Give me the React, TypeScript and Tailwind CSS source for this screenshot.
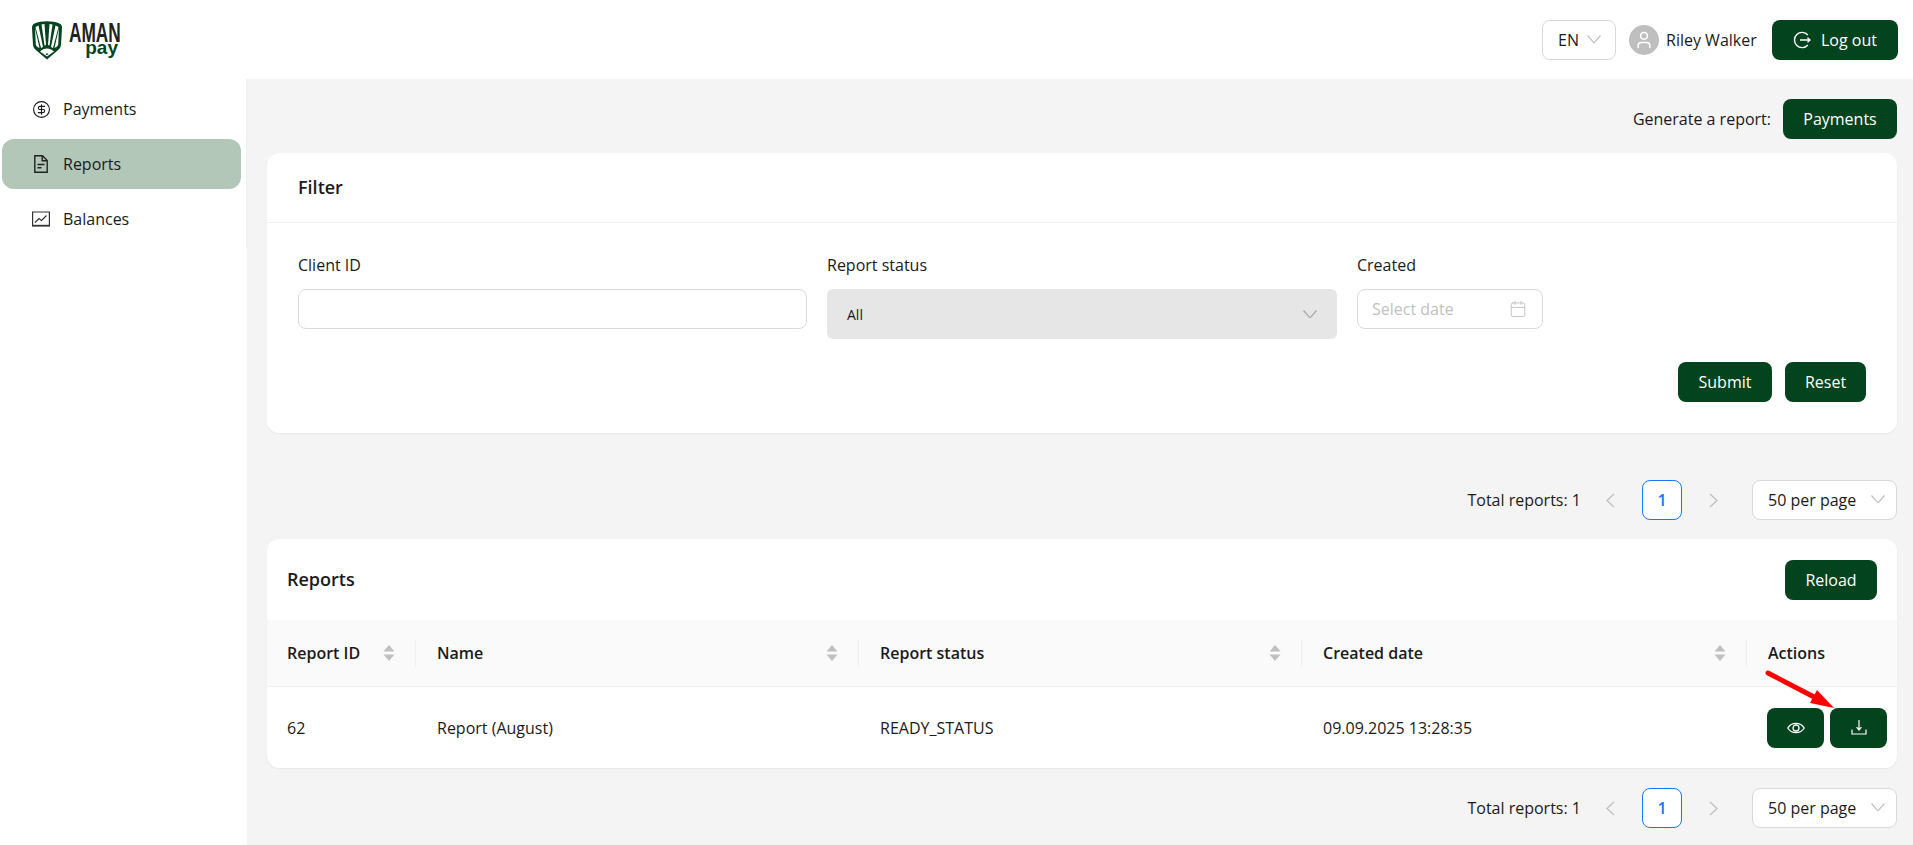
import { CircleDollarSign, Calendar, User } from 'lucide-react';

const Btn = ({ className = '', children }: { className?: string; children: React.ReactNode }) => (
  <button className={`flex h-10 items-center justify-center rounded-lg bg-[#03431d] text-white ${className}`}>{children}</button>
);

const Sorter = () => (
  <svg width="12" height="20" viewBox="0 0 12 20" className="shrink-0 fill-[#bfbfbf]">
    <path d="M6 2 L11.5 8.5 H0.5 Z" />
    <path d="M6 18 L11.5 11.5 H0.5 Z" />
  </svg>
);

const Down = ({ className = 'text-[#bfbfbf]', w = 14 }: { className?: string; w?: number }) => (
  <svg width={w} height={w * 0.6} viewBox="0 0 14 8.4" fill="none" stroke="currentColor" strokeWidth="1.2" className={`shrink-0 ${className}`}>
    <path d="M0.5 0.5 L7 7.8 L13.5 0.5" />
  </svg>
);

const Side = ({ right = false, className = '' }: { right?: boolean; className?: string }) => (
  <svg width="9" height="15" viewBox="0 0 9 15" fill="none" stroke="#bfbfbf" strokeWidth="1.3" className={`shrink-0 ${className}`}>
    <path d={right ? 'M1 1 L8 7.5 L1 14' : 'M8 1 L1 7.5 L8 14'} />
  </svg>
);

const Logo = () => (
  <div className="flex items-start gap-[7px]">
    <svg width="30" height="40" viewBox="0 0 30 40">
      <path d="M2.5 3.5 C9 0.5 21 0.5 27.5 3.5 C29.5 4.5 30 6 30 8 L29 25 C28.5 28 27 29.5 25 31 L15 39.5 L5 31 C3 29.5 1.5 28 1 25 L0 8 C0 6 0.5 4.5 2.5 3.5 Z" fill="#03431d" />
      <g fill="#fff">
        <path d="M3.5 7 L6.5 5.5 L11 27 L9 28 Z" />
        <path d="M9.5 4.5 L12.5 4 L14 25 L12.5 25.5 Z" />
        <path d="M17.5 4 L20.5 4.5 L17.5 25.5 L16 25 Z" />
        <path d="M23.5 5.5 L26.5 7 L21 28 L19 27 Z" />
        <path d="M3 8 L7.5 28 L5.5 27 C4.5 26 4 25.5 3.8 24.5 Z" />
        <path d="M27 8 L22.5 28 L24.5 27 C25.5 26 26 25.5 26.2 24.5 Z" />
        <path d="M8 31.5 C12 27.5 18 27.5 22 31.5 L15 36.5 Z" />
      </g>
      <path d="M13.5 34 C14.5 33.4 15.5 33.4 16.5 34 L15 35.2 Z" fill="#03431d" />
    </svg>
    <div className="relative h-[40px] w-[49px] font-['Liberation_Sans',sans-serif] font-bold">
      <span className="absolute left-0 top-[4px] origin-left scale-x-[0.64] whitespace-nowrap text-[27px] leading-[18px] text-[#222]">AMAN</span>
      <span className="absolute right-0 top-[22px] text-[19px] leading-[12px] text-[#03431d]">pay</span>
    </div>
  </div>
);

const LogoutIcon = () => (
  <svg width="18" height="18" viewBox="0 0 18 18" fill="none" stroke="currentColor" strokeWidth="1.4">
    <path d="M14.8 4 A7.6 7.6 0 1 0 14.8 14" />
    <path d="M7 9 H17 M14.5 6.8 L17 9 L14.5 11.2" />
  </svg>
);

const ReportIcon = () => (
  <svg width="14" height="18" viewBox="0 0 14 18" fill="none" stroke="#222" strokeWidth="1.4" className="ml-[2px] mr-[2px]">
    <path d="M0.8 0.8 H8.5 L13.2 5.5 V17.2 H0.8 Z" />
    <path d="M8.2 1 V5.8 H13" />
    <path d="M3.5 9.5 H10.5 M3.5 12.8 H7.5" />
  </svg>
);

const BalanceIcon = () => (
  <svg width="18" height="16" viewBox="0 0 18 16" fill="none" stroke="#333" strokeWidth="1.2">
    <path d="M0.6 1 H17.4 V14.5 H0.6 Z" />
    <path d="M0 14.7 H18" strokeWidth="1.8" />
    <path d="M3 11.5 L7 7.5 L9.5 9.5 L14.5 4.5" />
  </svg>
);

const EyeIcon = () => (
  <svg width="18" height="14" viewBox="0 0 18 14" fill="none" stroke="currentColor" strokeWidth="1.3">
    <path d="M0.8 7 C4.5 0.8 13.5 0.8 17.2 7 C13.5 13.2 4.5 13.2 0.8 7 Z" />
    <circle cx="9" cy="7" r="3" />
  </svg>
);

const DownloadIcon = () => (
  <svg width="16" height="15" viewBox="0 0 16 15" fill="none" stroke="currentColor" strokeWidth="1.2">
    <path d="M8 0 V9.5 M5.6 7.2 L8 10 L10.4 7.2" />
    <path d="M1 9.5 V14 H15 V9.5" />
  </svg>
);

const Per = () => (
  <div className="flex h-[40px] w-[145px] items-center justify-between rounded-lg border border-[#d9d9d9] bg-white pl-[15px] pr-[11px]">
    <span className="whitespace-nowrap">50 per page</span>
    <Down className="mb-[2px] text-[#bfbfbf]" />
  </div>
);

const Pager = ({ className = '' }: { className?: string }) => (
  <div className={`flex items-center justify-end ${className}`}>
    <span>Total reports: 1</span>
    <Side className="ml-[25px]" />
    <div className="ml-[27px] flex h-[40px] w-[40px] items-center justify-center rounded-lg border border-[#1677ff] bg-white font-semibold text-[#1677ff]">1</div>
    <Side right className="ml-[27px]" />
    <div className="ml-[34px]"><Per /></div>
  </div>
);

const columns = [
  { title: 'Report ID', w: 'w-[149px]', pl: 'pl-[20px]' },
  { title: 'Name', w: 'w-[443px]', pl: 'pl-[21px]' },
  { title: 'Report status', w: 'w-[443px]', pl: 'pl-[21px]' },
  { title: 'Created date', w: 'w-[445px]', pl: 'pl-[21px]' },
];

export default function App() {
  return (
    <div className="flex h-[845px] w-[1913px] flex-col overflow-hidden bg-[#f4f4f4] font-['Open_Sans',sans-serif] text-[16px] text-[#1a1a1a]">
      <header className="flex h-[79px] shrink-0 items-center bg-white pl-[32px] pr-[15px]">
        <Logo />
        <div className="ml-auto flex items-center">
          <div className="flex h-[40px] w-[74px] items-center justify-between rounded-lg border border-[#d9d9d9] pl-[15px] pr-[14px]">
            <span>EN</span>
            <Down />
          </div>
          <div className="ml-[13px] flex h-[30px] w-[30px] items-center justify-center rounded-full bg-[#bfbfbf] text-white">
            <User size={20} strokeWidth={1.8} />
          </div>
          <span className="ml-[7px] w-[94px] whitespace-nowrap">Riley Walker</span>
          <Btn className="ml-[12px] w-[126px] gap-[10px]">
            <LogoutIcon />
            <span>Log out</span>
          </Btn>
        </div>
      </header>

      <div className="flex min-h-0 flex-1">
        <aside className="w-[247px] shrink-0 bg-white">
          <nav className="flex h-[169px] flex-col gap-[5px] border-r border-[#f0f0f0] pl-[2px] pr-[5px] pt-[5px]">
            <div className="flex h-[50px] items-center gap-[12px] pl-[30px]">
              <CircleDollarSign size={19} strokeWidth={1.4} />
              <span>Payments</span>
            </div>
            <div className="flex h-[50px] items-center gap-[13px] rounded-xl bg-[#b3c7b9] pl-[30px]">
              <ReportIcon />
              <span>Reports</span>
            </div>
            <div className="flex h-[50px] items-center gap-[13px] pl-[30px]">
              <BalanceIcon />
              <span>Balances</span>
            </div>
          </nav>
        </aside>

        <main className="min-w-0 flex-1 pl-[20px] pr-[16px] pt-[20px]">
          <div className="flex items-center justify-end gap-[12px]">
            <span>Generate a report:</span>
            <Btn className="w-[114px]">Payments</Btn>
          </div>

          <section className="mt-[14px] h-[280px] rounded-xl bg-white shadow-[0_1px_2px_rgba(0,0,0,0.05)]">
            <div className="flex h-[70px] items-center border-b border-[#f0f0f0] px-[31px] text-[18px] font-semibold">Filter</div>
            <div className="px-[31px]">
              <div className="flex gap-[20px] pt-[32px]">
                <div className="w-[509px]">
                  <label className="block leading-[20px]">Client ID</label>
                  <input className="mt-[14px] h-[40px] w-full rounded-lg border border-[#d9d9d9]" />
                </div>
                <div className="w-[510px]">
                  <label className="block leading-[20px]">Report status</label>
                  <div className="mt-[14px] flex h-[50px] items-center justify-between rounded-md bg-[#e6e6e6] pl-[20px] pr-[20px] text-[14px]">
                    <span>All</span>
                    <Down className="text-[#a6a6a6]" />
                  </div>
                </div>
                <div className="w-[186px]">
                  <label className="block leading-[20px]">Created</label>
                  <div className="mt-[14px] flex h-[40px] items-center justify-between rounded-lg border border-[#d9d9d9] pl-[14px] pr-[15px] text-[#bfbfbf]">
                    <span>Select date</span>
                    <Calendar size={18} strokeWidth={1.2} />
                  </div>
                </div>
              </div>
              <div className="mt-[23px] flex justify-end gap-[13px]">
                <Btn className="w-[94px]">Submit</Btn>
                <Btn className="w-[81px]">Reset</Btn>
              </div>
            </div>
          </section>

          <Pager className="mt-[47px]" />

          <section className="relative mt-[19px] rounded-xl bg-white shadow-[0_1px_2px_rgba(0,0,0,0.05)]">
            <div className="flex h-[81px] items-center justify-between pl-[20px] pr-[20px]">
              <span className="text-[18px] font-semibold">Reports</span>
              <Btn className="w-[92px]">Reload</Btn>
            </div>
            <div className="flex h-[67px] items-center border-b border-[#f0f0f0] bg-[#fafafa] font-semibold">
              {columns.map((c) => (
                <div key={c.title} className={`flex h-[28px] items-center justify-between border-r border-[#f0f0f0] pr-[20px] ${c.pl} ${c.w}`}>
                  <span>{c.title}</span>
                  <Sorter />
                </div>
              ))}
              <div className="pl-[21px]">Actions</div>
            </div>
            <div className="flex h-[81px] items-center">
              <div className="w-[149px] pl-[20px]">62</div>
              <div className="w-[443px] pl-[21px]">Report (August)</div>
              <div className="w-[443px] pl-[21px]">READY_STATUS</div>
              <div className="w-[445px] pl-[21px]">09.09.2025 13:28:35</div>
              <div className="flex gap-[6px] pl-[20px]">
                <Btn className="w-[57px]"><EyeIcon /></Btn>
                <Btn className="w-[57px]"><DownloadIcon /></Btn>
              </div>
            </div>
            {/* red annotation arrow sits over the table */}
            <svg className="absolute left-[1493px] top-[126px]" width="80" height="50" viewBox="0 0 80 50">
              <path d="M8 8 L56 33" stroke="#f00" strokeWidth="5" strokeLinecap="round" />
              <path d="M74 43 L57 25 L50 38 Z" fill="#f00" />
            </svg>
          </section>

          <Pager className="mt-[20px]" />
        </main>
      </div>
    </div>
  );
}
